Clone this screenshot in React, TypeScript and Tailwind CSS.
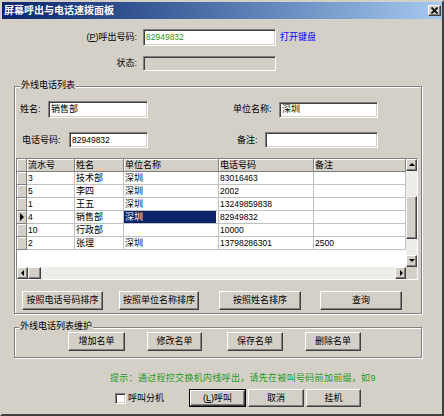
import React from "react";

const raised =
  "flex items-center justify-center bg-[#D4D0C8] border border-t-white border-l-white border-r-[#404040] border-b-[#404040] shadow-[inset_-1px_-1px_0_#808080] text-[9px] leading-none text-black";
const sunken =
  "border border-t-[#808080] border-l-[#808080] border-r-white border-b-white shadow-[inset_1px_1px_0_#404040,inset_-1px_-1px_0_#D4D0C8]";
const num = "text-[8.5px]";

function Btn({ w, children, def }: { w: string; children: React.ReactNode; def?: boolean }) {
  if (def) {
    return (
      <div className={`${w} h-full border border-black flex`}>
        <div className={`${raised} flex-1`}>{children}</div>
      </div>
    );
  }
  return <div className={`${raised} ${w} h-full`}>{children}</div>;
}

function Tri({ dir }: { dir: "up" | "down" | "left" | "right" }) {
  const pts =
    dir === "up"
      ? "1,5 4,2 7,5"
      : dir === "down"
      ? "1,2 4,5 7,2"
      : dir === "left"
      ? "5,1 2,4 5,7"
      : "3,1 6,4 3,7";
  return (
    <svg width="8" height="8" viewBox="0 0 8 8">
      <polygon points={pts} fill="#000" />
    </svg>
  );
}

const rows = [
  ["3", "技术部", "深圳", "83016463", ""],
  ["5", "李四", "深圳", "2002", ""],
  ["1", "王五", "深圳", "13249859838", ""],
  ["4", "销售部", "深圳", "82949832", ""],
  ["10", "行政部", "", "10000", ""],
  ["2", "张理", "深圳", "13798286301", "2500"],
];

const hdrCell =
  "h-full flex items-center px-[1px] bg-[#D4D0C8] border-r border-b border-r-[#808080] border-b-[#808080] shadow-[inset_1px_1px_0_#fff] overflow-hidden whitespace-nowrap";
const cell =
  "h-full flex items-center px-[1px] bg-white border-r border-b border-[#C0C0C0] overflow-hidden whitespace-nowrap";

function Grid() {
  return (
    <div className="w-[402px] h-[122px] ml-[1px] mt-[10px] border border-t-[#808080] border-l-[#808080] border-r-white border-b-white flex flex-col">
      <div className="flex h-[108px]">
        <div className="flex-1 flex flex-col bg-white overflow-hidden">
          <div className="flex h-[13px] shrink-0">
            <div className={`${hdrCell} w-[10px]`} />
            <div className={`${hdrCell} w-[48px]`}>流水号</div>
            <div className={`${hdrCell} w-[49px]`}>姓名</div>
            <div className={`${hdrCell} w-[95px]`}>单位名称</div>
            <div className={`${hdrCell} w-[95px]`}>电话号码</div>
            <div className={`${hdrCell} flex-1`}>备注</div>
          </div>
          {rows.map((r, i) => (
            <div key={i} className="flex h-[13px] shrink-0">
              <div className={`${hdrCell} w-[10px] justify-center !px-0`}>
                {i === 3 ? (
                  <svg width="6" height="8" viewBox="0 0 6 8">
                    <polygon points="1,0 5,4 1,8" fill="#000" />
                  </svg>
                ) : null}
              </div>
              <div className={`${cell} w-[48px] ${num}`}>{r[0]}</div>
              <div className={`${cell} w-[49px]`}>{r[1]}</div>
              <div className={`${cell} w-[95px]`}>
                {i === 3 ? (
                  <span className="flex items-center h-full w-full bg-[#0A246A] text-white -mx-[1px] px-[1px]">{r[2]}</span>
                ) : (
                  r[2]
                )}
              </div>
              <div className={`${cell} w-[95px] ${num}`}>{r[3]}</div>
              <div className={`${cell} flex-1 ${num}`}>{r[4]}</div>
            </div>
          ))}
        </div>
        <div className="w-[11px] flex flex-col bg-[#EEEDE9]">
          <div className={`${raised} h-[12px] w-full`}>
            <Tri dir="up" />
          </div>
          <div className="flex-1 flex flex-col">
            <div className={`${raised} mt-[25px] h-[43px] w-full`} />
          </div>
          <div className={`${raised} h-[12px] w-full`}>
            <Tri dir="down" />
          </div>
        </div>
      </div>
      <div className="flex h-[12px] bg-[#EEEDE9]">
        <div className={`${raised} w-[11px] h-full`}>
          <Tri dir="left" />
        </div>
        <div className={`${raised} w-[13px] h-full`} />
        <div className="flex-1" />
        <div className={`${raised} w-[11px] h-full`}>
          <Tri dir="right" />
        </div>
        <div className="w-[11px] h-full bg-[#D4D0C8]" />
      </div>
    </div>
  );
}

export default function App() {
  return (
    <div className="w-[444px] h-[416px] bg-[#D4D0C8] border-2 border-t-[#D4D0C8] border-l-[#D4D0C8] border-r-[#404040] border-b-[#404040] flex flex-col text-[9px] leading-none text-black font-['Liberation_Sans','Noto_Sans_CJK_SC',sans-serif] overflow-hidden">
      {/* title bar */}
      <div className="h-[17px] shrink-0 flex items-center bg-gradient-to-r from-[#0A246A] to-[#A6CAF0] pl-[2px] pr-[1px]">
        <span className="text-white font-bold text-[10px] leading-none">屏幕呼出与电话速拨面板</span>
        <div className="flex-1" />
        <div className={`${raised} w-[13px] h-[11px]`}>
          <svg width="7" height="7" viewBox="0 0 7 7">
            <path d="M0.5 0.5 L6.5 6.5 M6.5 0.5 L0.5 6.5" stroke="#000" strokeWidth="1.6" />
          </svg>
        </div>
      </div>

      {/* body */}
      <div className="flex flex-col flex-1">
        <div className="flex items-center mt-[10px] h-[17px]">
          <div className="w-[135px] text-right">
            (<span className="underline">P</span>)呼出号码:
          </div>
          <div className={`${sunken} ml-[6px] w-[133px] h-[17px] bg-white flex items-center px-[2px] text-[#1E9A1E] ${num}`}>
            82949832
          </div>
          <span className="ml-[4px] text-[#0000FF]">打开键盘</span>
        </div>
        <div className="flex items-center mt-[10px] h-[15px]">
          <div className="w-[135px] text-right">状态:</div>
          <div className={`${sunken} ml-[6px] w-[133px] h-[15px] bg-[#D4D0C8]`} />
        </div>

        {/* group 1 */}
        <div className="relative ml-[12px] mt-[15px] w-[408px] h-[228px] border border-[#808080] shadow-[inset_1px_1px_0_#fff,1px_1px_0_#fff] flex flex-col">
          <span className="absolute -top-[6px] left-[5px] bg-[#D4D0C8] px-[1px]">外线电话列表</span>
          <div className="flex items-center mt-[14px] h-[17px]">
            <span className="ml-[5px] w-[28px]">姓名:</span>
            <div className={`${sunken} w-[100px] h-[17px] bg-white flex items-center px-[2px]`}>销售部</div>
            <span className="ml-[85px] w-[46px]">单位名称:</span>
            <div className={`${sunken} w-[99px] h-[16px] bg-white flex items-center px-[2px]`}>深圳</div>
          </div>
          <div className="flex items-center mt-[14px] h-[16px]">
            <span className="ml-[7px] w-[47px]">电话号码:</span>
            <div className={`${sunken} w-[79px] h-[16px] bg-white flex items-center px-[2px] ${num}`}>82949832</div>
            <span className="ml-[89px] w-[28px]">备注:</span>
            <div className={`${sunken} w-[113px] h-[16px] bg-white`} />
          </div>
          <Grid />
          <div className="flex mt-[11px] h-[19px]">
            <div className="ml-[7px] flex h-full">
              <Btn w="w-[81px]">按照电话号码排序</Btn>
            </div>
            <div className="ml-[16px] flex h-full">
              <Btn w="w-[80px]">按照单位名称排序</Btn>
            </div>
            <div className="ml-[20px] flex h-full">
              <Btn w="w-[82px]">按照姓名排序</Btn>
            </div>
            <div className="ml-[19px] flex h-full">
              <Btn w="w-[82px]">查询</Btn>
            </div>
          </div>
        </div>

        {/* group 2 */}
        <div className="relative ml-[12px] mt-[13px] w-[408px] h-[31px] border border-[#808080] shadow-[inset_1px_1px_0_#fff,1px_1px_0_#fff] flex">
          <span className="absolute -top-[6px] left-[4px] bg-[#D4D0C8] px-[1px]">外线电话列表维护</span>
          <div className="flex mt-[4px] h-[19px]">
            <div className="ml-[53px] flex h-full">
              <Btn w="w-[57px]">增加名单</Btn>
            </div>
            <div className="ml-[22px] flex h-full">
              <Btn w="w-[55px]">修改名单</Btn>
            </div>
            <div className="ml-[25px] flex h-full">
              <Btn w="w-[56px]">保存名单</Btn>
            </div>
            <div className="ml-[22px] flex h-full">
              <Btn w="w-[56px]">删除名单</Btn>
            </div>
          </div>
        </div>

        {/* hint */}
        <div className="mt-[14px] ml-[108px] h-[12px] flex items-center text-[#1E9A1E] whitespace-nowrap tracking-[0.3px]">
          提示：通过程控交换机内线呼出，请先在被叫号码前加前缀，如9
        </div>

        {/* bottom row */}
        <div className="flex items-center mt-[5px] h-[18px]">
          <div className={`${sunken} ml-[113px] w-[11px] h-[11px] bg-white`} />
          <span className="ml-[2px] w-[61px]">呼叫分机</span>
          <div className="flex h-full">
            <Btn w="w-[57px]" def>
              (<span className="underline">L</span>)呼叫
            </Btn>
          </div>
          <div className="ml-[2px] flex h-full">
            <Btn w="w-[56px]">取消</Btn>
          </div>
          <div className="ml-[2px] flex h-full">
            <Btn w="w-[55px]">挂机</Btn>
          </div>
        </div>
      </div>
    </div>
  );
}
